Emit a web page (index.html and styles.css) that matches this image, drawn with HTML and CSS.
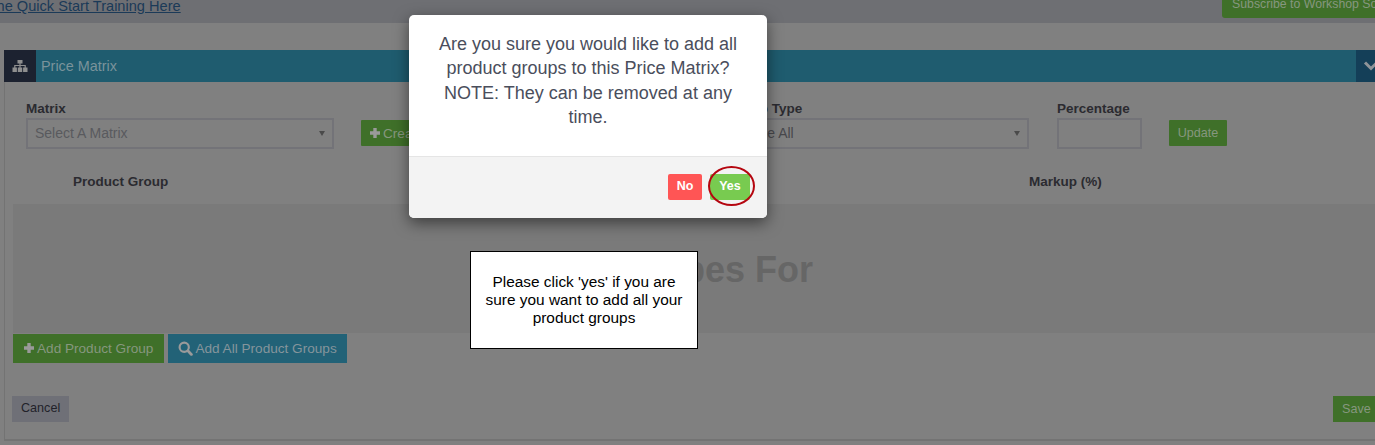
FILE: index.html
```html
<!DOCTYPE html>
<html lang="en">
<head>
<meta charset="utf-8">
<title>Price Matrix</title>
<link rel="stylesheet" href="styles.css">
</head>
<body>
<div class="page">
  <header class="topbar">
    <a class="training-link" href="#">Watch The Quick Start Training Here</a>
    <a class="subscribe" href="#">Subscribe to Workshop Software</a>
  </header>
  <section class="panel">
    <div class="panel-head">
      <span class="panel-icon">
        <svg width="16" height="14" viewBox="0 0 16 14"><path fill="#8f8f8f" d="M5.500 1h5v3.500H8.600V6h5.200v2.500h1.700V13h-4.400V8.500h1.500V7H8.600v1.500h1.600V13H5.800V8.500h1.600V7H3.400v1.500h1.500V13H.5V8.500h1.700V6h5.200V4.500H5.500z"/></svg>
      </span>
      <span class="panel-title">Price Matrix</span>
      <span class="panel-toggle">
        <svg width="16" height="12" viewBox="0 0 16 12"><path fill="none" stroke="#8f9499" stroke-width="3" d="M2 2.500l6 6 6-6"/></svg>
      </span>
    </div>
    <div class="form-row">
      <div class="field field-matrix">
        <label class="label">Matrix</label>
        <div class="select placeholder">Select A Matrix<i class="caret"></i></div>
      </div>
      <a class="btn btn-green btn-create" href="#"><svg class="ico" width="12" height="12" viewBox="0 0 12 12"><path fill="#9a9a9a" d="M4.300 1h3.400v3.300H11v3.400H7.700V11H4.300V7.700H1V4.300h3.300z"/></svg>Create Matrix</a>
      <div class="field field-type">
        <label class="label">Markup Type</label>
        <div class="select select-type">Change All<i class="caret"></i></div>
      </div>
      <div class="field field-percent">
        <label class="label">Percentage</label>
        <div class="input"></div>
      </div>
      <a class="btn btn-green btn-update" href="#">Update</a>
    </div>
    <div class="table-head">
      <span class="col-group">Product Group</span>
      <span class="col-markup">Markup (%)</span>
    </div>
    <div class="well"><span class="empty">No Price Types For</span></div>
    <div class="actions">
      <a class="btn btn-green btn-add" href="#"><svg class="ico" width="12" height="12" viewBox="0 0 12 12"><path fill="#9a9a9a" d="M4.300 1h3.400v3.300H11v3.400H7.700V11H4.300V7.700H1V4.300h3.300z"/></svg>Add Product Group</a>
      <a class="btn btn-teal btn-add" href="#"><svg class="ico" width="15" height="15" viewBox="0 0 14 14"><circle cx="5.800" cy="5.800" r="4.300" fill="none" stroke="#9a9a9a" stroke-width="2"/><path stroke="#9a9a9a" stroke-width="2.600" stroke-linecap="round" d="M9.200 9.200l3.300 3.300"/></svg>Add All Product Groups</a>
    </div>
    <div class="footer-row">
      <a class="btn btn-grey" href="#">Cancel</a>
      <a class="btn btn-green btn-save" href="#">Save</a>
    </div>
  </section>
</div>

<div class="modal">
  <p class="modal-text">Are you sure you would like to add all product groups to this Price Matrix? NOTE: They can be removed at any time.</p>
  <div class="modal-foot">
    <button class="mbtn mbtn-no">No</button>
    <button class="mbtn mbtn-yes">Yes<span class="ring"></span></button>
  </div>
</div>

<div class="callout">Please click 'yes' if you are sure you want to add all your product groups</div>
</body>
</html>
```
FILE: styles.css
```css
* { box-sizing: border-box; }
html, body {
  margin: 0;
  height: 445px;
  overflow: hidden;
  background: #808080;
  font-family: "Liberation Sans", Arial, sans-serif;
  font-size: 14px;
}
a { text-decoration: none; }

.page { width: 1375px; height: 445px; overflow: hidden; }

.topbar {
  height: 23px;
  background: #6e6f73;
  display: flex;
  justify-content: space-between;
  align-items: flex-start;
}
.training-link {
  margin-left: -57px;
  margin-top: -3px;
  line-height: 18px;
  font-size: 14.6px;
  color: #1b3a58;
  text-decoration: underline;
  white-space: nowrap;
}
.subscribe {
  flex: none;
  width: 210px;
  margin-right: -57px;
  height: 18px;
  padding: 0 10px;
  background: #3f7029;
  border-radius: 0 0 3px 3px;
  color: #86977f;
  font-size: 12.3px;
  line-height: 8px;
  white-space: nowrap;
  overflow: hidden;
}

.panel {
  margin: 27px -20px 0 4px;
  height: 391px;
  border-left: 1px solid #737373;
  border-bottom: 2px solid #737373;
}
.panel-head {
  margin-left: -1px;
  height: 32px;
  background: #1f5c6f;
  display: flex;
  align-items: center;
}
.panel-icon {
  width: 32px;
  height: 32px;
  background: #1c2230;
  display: flex;
  align-items: center;
  justify-content: center;
}
.panel-title {
  flex: 1;
  margin-left: 5px;
  color: #7a939b;
  font-size: 14.4px;
}
.panel-toggle {
  width: 39px;
  height: 32px;
  background: #143f58;
  padding: 10px 0 0 7px;
  display: flex;
  align-items: flex-start;
}

.form-row {
  display: flex;
  align-items: flex-start;
  padding: 19px 0 0 21px;
}
.field { display: flex; flex-direction: column; }
.field-matrix { width: 308px; }
.field-type { width: 309px; }
.field-percent { width: 85px; margin-left: 28px; }
.label {
  color: #2b2b30;
  font-weight: 700;
  font-size: 13.5px;
  line-height: 16px;
}
.select, .input {
  position: relative;
  height: 31px;
  margin-top: 1px;
  border: 2px solid #737378;
  color: #48484c;
  font-size: 14px;
  line-height: 27px;
  padding-left: 7px;
}
.select-type { padding-left: 4px; }
.placeholder { color: #595a5e; }
.caret {
  position: absolute;
  right: 7px;
  top: 11px;
  border-left: 3.5px solid transparent;
  border-right: 3.5px solid transparent;
  border-top: 5px solid #4a4a4a;
}

.btn {
  display: inline-flex;
  align-items: center;
  height: 26px;
  font-size: 13.6px;
  white-space: nowrap;
}
.btn-green { background: #3f7029; color: #86977f; }
.btn-teal { background: #226277; color: #85959c; }
.btn-grey { background: #6f7077; color: #22222a; padding: 0 9px 3px; font-size: 12.6px; }
.ico { margin-right: 2px; flex: none; }
.btn-create {
  width: 359px;
  margin: 19px 0 0 27px;
  padding-left: 8px;
  border-radius: 1px;
}
.btn-update {
  width: 58px;
  margin: 19px 0 0 27px;
  justify-content: center;
  font-size: 12.6px;
  border-radius: 1px;
}

.table-head {
  display: flex;
  margin-top: 25px;
  color: #2b2b30;
  font-size: 13.5px;
  font-weight: 700;
  line-height: 16px;
}
.col-group { margin-left: 68px; width: 956px; }

.well {
  margin: 14px 0 0 8px;
  height: 129px;
  background: #7a7a7a;
  display: flex;
  align-items: center;
  justify-content: flex-end;
  padding: 3px 582px 0 0;
  overflow: hidden;
}
.empty {
  color: #666666;
  font-size: 36px;
  font-weight: 700;
  white-space: nowrap;
}

.actions {
  display: flex;
  gap: 4px;
  margin: 1px 0 0 8px;
}
.btn-add { height: 29px; padding: 0 11px 1px 10px; }
.btn-teal.btn-add { padding-right: 10px; }

.footer-row {
  display: flex;
  justify-content: space-between;
  margin: 33px 0 0 7px;
}
.btn-save {
  width: 62px;
  padding-left: 9px;
  font-size: 12.6px;
}

.modal {
  position: absolute;
  left: 409px;
  top: 15px;
  width: 358px;
  height: 203px;
  background: #fff;
  border-radius: 5px;
  box-shadow: 0 5px 15px rgba(0, 0, 0, .5);
  display: flex;
  flex-direction: column;
}
.modal-text {
  flex: 1;
  margin: 0;
  padding: 17px 20px 0;
  text-align: center;
  color: #4a4e5c;
  font-size: 18px;
  line-height: 24.3px;
}
.modal-foot {
  height: 62px;
  background: #f3f3f3;
  border-top: 1px solid #e5e5e5;
  border-radius: 0 0 5px 5px;
  display: flex;
  justify-content: flex-end;
  gap: 8px;
  padding: 17px 17px 0 0;
}
.mbtn {
  position: relative;
  height: 26px;
  border: 0;
  padding: 0 0 3px;
  border-radius: 2px;
  color: #fff;
  font-family: inherit;
  font-size: 12.5px;
  font-weight: 700;
}
.mbtn-no { width: 34px; background: #ff5555; }
.mbtn-yes { width: 40px; background: #78cb50; }
.ring {
  position: absolute;
  left: -2px;
  top: -8px;
  width: 47px;
  height: 40px;
  border: 2.5px solid #b5060f;
  border-radius: 50%;
}

.callout {
  position: absolute;
  left: 470px;
  top: 251px;
  width: 228px;
  height: 98px;
  padding: 21px 8px 0;
  background: #fff;
  border: 1px solid #000;
  color: #000;
  text-align: center;
  font-size: 15.4px;
  line-height: 18px;
}
```
